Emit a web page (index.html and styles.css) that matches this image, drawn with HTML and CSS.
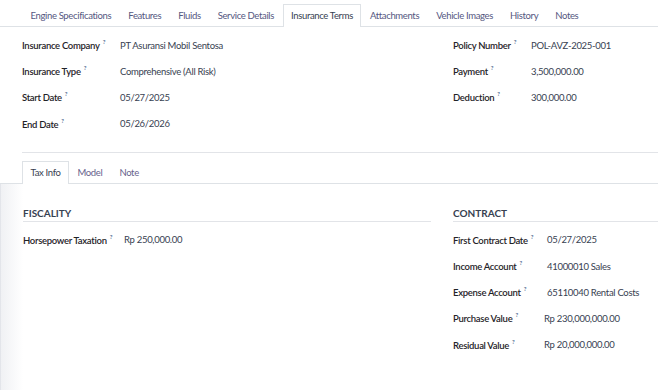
FILE: index.html
```html
<!DOCTYPE html>
<html lang="en">
<head>
  <meta charset="UTF-8">
  <title>Vehicle - Insurance Terms</title>
  <link rel="stylesheet" href="styles.css">
</head>
<body>
  <!-- main notebook -->
  <div class="tabs">
    <div class="tab">Engine Specifications</div>
    <div class="tab">Features</div>
    <div class="tab">Fluids</div>
    <div class="tab">Service Details</div>
    <div class="tab active">Insurance Terms</div>
    <div class="tab">Attachments</div>
    <div class="tab">Vehicle Images</div>
    <div class="tab">History</div>
    <div class="tab">Notes</div>
  </div>

  <div class="page">
    <div class="cols">
      <div class="group g-insurance">
        <div class="row"><span class="label">Insurance Company<sup>?</sup></span><span class="value">PT Asuransi Mobil Sentosa</span></div>
        <div class="row"><span class="label">Insurance Type<sup>?</sup></span><span class="value">Comprehensive (All Risk)</span></div>
        <div class="row"><span class="label">Start Date<sup>?</sup></span><span class="value">05/27/2025</span></div>
        <div class="row"><span class="label">End Date<sup>?</sup></span><span class="value">05/26/2026</span></div>
      </div>
      <div class="group g-policy">
        <div class="row"><span class="label">Policy Number<sup>?</sup></span><span class="value">POL-AVZ-2025-001</span></div>
        <div class="row"><span class="label">Payment<sup>?</sup></span><span class="value">3,500,000.00</span></div>
        <div class="row"><span class="label">Deduction<sup>?</sup></span><span class="value">300,000.00</span></div>
      </div>
    </div>

    <div class="separator"></div>

    <!-- inner notebook -->
    <div class="tabs sub">
      <div class="tab active">Tax Info</div>
      <div class="tab">Model</div>
      <div class="tab">Note</div>
    </div>

    <div class="sub-body">
      <div class="cols">
        <div class="group g-fiscal">
          <div class="section-title">Fiscality</div>
          <div class="row"><span class="label">Horsepower Taxation<sup>?</sup></span><span class="value">Rp 250,000.00</span></div>
        </div>
        <div class="group g-contract">
          <div class="section-title">Contract</div>
          <div class="row"><span class="label">First Contract Date<sup>?</sup></span><span class="value">05/27/2025</span></div>
          <div class="row"><span class="label">Income Account<sup>?</sup></span><span class="value">41000010 Sales</span></div>
          <div class="row"><span class="label">Expense Account<sup>?</sup></span><span class="value">65110040 Rental Costs</span></div>
          <div class="row"><span class="label">Purchase Value<sup>?</sup></span><span class="value money">Rp 230,000,000.00</span></div>
          <div class="row"><span class="label">Residual Value<sup>?</sup></span><span class="value money">Rp 20,000,000.00</span></div>
        </div>
      </div>
    </div>
  </div>
</body>
</html>
```

FILE: styles.css
```css
* {
  box-sizing: border-box;
}

body {
  margin: 0;
  padding: 0;
  background-color: white;
  color: #374151;
  font-family: Lato, "Open Sans", sans-serif;
  font-size: 9.5px;
  letter-spacing: -0.3px;
  overflow: hidden;
  height: 390px;
}

.tabs {
  display: flex;
  padding: 4px 0 0 22px;
  border-bottom: 1px solid #dee2e6;
}

.tab {
  height: 23px;
  line-height: 22px;
  padding: 0 7.5px;
  border: 1px solid transparent;
  border-bottom: none;
  margin-bottom: -1px;
  color: #55577f;
  letter-spacing: -0.35px;
  white-space: nowrap;
}

.tab.active {
  background-color: white;
  border-color: #dee2e6;
  color: #374151;
}

.tabs.sub {
  padding: 8px 0 0 22px;
  margin-left: -22px;
}

.tabs.sub .tab {
  color: #675f8c;
}

.tabs.sub .tab.active {
  color: #374151;
}

.page {
  padding: 5px 0 0 22px;
}

.cols {
  display: grid;
  grid-template-columns: 1fr 205px;
  column-gap: 22px;
}

.row {
  display: flex;
  align-items: center;
  height: 26.2px;
}

.label {
  flex: none;
  color: #1f2328;
  font-weight: 600;
}

.label sup {
  font-size: 6px;
  color: #3b5a85;
  margin-left: 3px;
  position: relative;
  top: -1px;
}

.g-insurance .label { width: 98px; }
.g-policy .label { width: 78px; }
.g-fiscal .label { width: 101px; }
.g-contract .label { width: 94px; }
.g-contract .value.money { margin-left: -3px; }

.separator {
  height: 1px;
  background-color: #e2e4e8;
  margin-top: 15px;
}

.sub-body {
  margin-left: -22px;
  padding: 21px 0 0 22px;
  height: 206px;
  border-left: 1px solid #e3e5ea;
  background: linear-gradient(to right, #f0f1f4, #ffffff 22px);
}

.section-title {
  text-transform: uppercase;
  font-weight: 700;
  font-size: 10px;
  letter-spacing: 0;
  color: #374151;
  line-height: 16px;
  border-bottom: 1px solid #e2e4e8;
  margin-bottom: 5px;
}
```
